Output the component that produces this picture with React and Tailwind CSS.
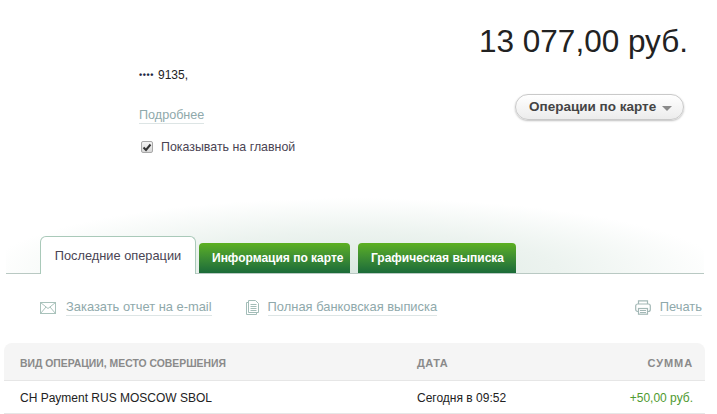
import React from "react";

function MailIcon() {
  return (
    <svg width="16" height="12" viewBox="0 0 16 12" fill="none" stroke="#a9c2bb" strokeWidth="1">
      <rect x="0.5" y="0.5" width="15" height="11" />
      <path d="M0.5 0.5L8 6.5L15.5 0.5M0.5 11.5L6 5M15.5 11.5L10 5" />
    </svg>
  );
}

function DocIcon() {
  return (
    <svg width="14" height="15" viewBox="0 0 14 15" fill="none" stroke="#a3bdb8" strokeWidth="1">
      <path d="M2.5 2.5H0.5V14.5H10.5V12.5" />
      <path d="M2.5 0.5H9.5L12.5 3.5V12.5H2.5Z" fill="#fff" />
      <path d="M4.5 4.5H10.5M4.5 6.5H10.5M4.5 8.5H10.5M4.5 10.5H10.5" />
    </svg>
  );
}

function PrintIcon() {
  return (
    <svg width="16" height="15" viewBox="0 0 16 15" fill="none" stroke="#a3b8b6" strokeWidth="1.2">
      <path d="M3.5 4V0.8H12.5V4" />
      <rect x="0.7" y="4" width="14.6" height="7.5" rx="2" />
      <rect x="3.5" y="8.5" width="9" height="5.7" fill="#fff" />
      <path d="M5 10.5H11M5 12.5H11" />
    </svg>
  );
}

function ActionLink({ icon, children, className }) {
  return (
    <a href="#" className={`flex items-center ${className}`}>
      {icon}
      <span className="text-[12.9px] leading-[16px] text-[#8fa9ab] border-b border-[#dde5e5]">{children}</span>
    </a>
  );
}

export default function App() {
  return (
    <div className="w-[717px] h-[414px] overflow-hidden bg-white text-[12px] text-[#222] font-['Liberation_Sans',Arial,sans-serif]">
      <div className="h-[236px] flex justify-between">
        <div className="pl-[139px] pt-[67px]">
          <div className="flex items-center h-[16px] leading-[16px]">
            <span className="text-[#1f2a44] text-[9px] tracking-[0.6px] font-bold mr-[4px]">••••</span>
            <span>9135,</span>
          </div>
          <a href="#" className="inline-block mt-[25px] text-[12.6px] leading-[15px] text-[#8fa9ab] border-b border-[#dde5e5]">
            Подробнее
          </a>
          <label className="flex items-center mt-[15px] ml-[2px]">
            <span className="w-[12px] h-[12px] flex items-center justify-center rounded-[2px] border border-[#a8a8a8] bg-gradient-to-b from-[#f4f4f4] to-[#d8d8d8]">
              <svg width="10" height="9" viewBox="0 0 10 9" fill="none" stroke="#333" strokeWidth="2">
                <path d="M1.5 4.5L4 7L8.5 1.5" />
              </svg>
            </span>
            <span className="ml-[8px] text-[12.4px] text-[#4a4453] leading-[16px]">Показывать на главной</span>
          </label>
        </div>
        <div className="pr-[29px] flex flex-col items-end">
          <div className="pt-[22px] text-[31.5px] leading-[38px] text-[#222]">13 077,00 руб.</div>
          <button className="mt-[34px] mr-[4px] w-[169px] h-[26px] pl-[13px] flex items-center rounded-full border border-[#c9c9c9] bg-gradient-to-b from-white to-[#ececec] shadow-[0_1px_2px_rgba(0,0,0,0.25)]">
            <span className="text-[13.5px] font-bold text-[#444]">Операции по карте</span>
            <span className="ml-[6px] mt-[2px] w-0 h-0 border-x-[5px] border-x-transparent border-t-[5px] border-t-[#8a8a8a]" />
          </button>
        </div>
      </div>

      <div className="relative ml-[6px] w-[698px] h-[38px] flex items-end pl-[34px] border-b border-[#b9c9c3]">
        <div className="absolute left-0 right-0 bottom-0 h-[75px] bg-[radial-gradient(ellipse_53%_100%_at_50%_100%,#dbe8e1_0%,#ecf3ef_55%,#ffffff_100%)]" />
        <div className="relative z-10 w-[156px] h-[38px] -mb-px flex items-center justify-center bg-white border border-b-0 border-[#a9c9b9] rounded-t-[6px] text-[#4a4453] text-[12.8px]">
          Последние операции
        </div>
        <div className="relative z-10 ml-[3px] w-[151px] h-[30px] flex items-center pl-[13px] rounded-t-[4px] bg-gradient-to-b from-[#5cb01f] to-[#1a6b38] text-white font-bold text-[12px]">
          Информация по карте
        </div>
        <div className="relative z-10 ml-[8px] w-[158px] h-[30px] flex items-center pl-[13px] rounded-t-[4px] bg-gradient-to-b from-[#5cb01f] to-[#1a6b38] text-white font-bold text-[12px]">
          Графическая выписка
        </div>
      </div>

      <div className="h-[69px] flex items-center pl-[40px] pr-[15px] pb-[2px]">
        <ActionLink icon={<MailIcon />} className="gap-[10px]">Заказать отчет на e-mail</ActionLink>
        <ActionLink icon={<DocIcon />} className="gap-[8px] ml-[34px]">Полная банковская выписка</ActionLink>
        <ActionLink icon={<PrintIcon />} className="gap-[9px] ml-auto">Печать</ActionLink>
      </div>

      <div className="ml-[4px] w-[701px]">
        <div className="h-[38px] pt-[4px] flex items-center pl-[16px] pr-[12px] bg-[#f5f5f5] rounded-t-[8px] border-b border-[#e6e6e6] font-bold text-[#8a8a8a]">
          <span className="w-[397px] text-[10.4px]">ВИД ОПЕРАЦИИ, МЕСТО СОВЕРШЕНИЯ</span>
          <span className="text-[11px] tracking-[0.5px]">ДАТА</span>
          <span className="ml-auto text-[11px] tracking-[0.9px]">СУММА</span>
        </div>
        <div className="h-[33px] pt-[1px] flex items-center pl-[16px] pr-[12px] border-b border-[#e6e6e6] text-[12px]">
          <span className="w-[397px]">CH Payment RUS MOSCOW SBOL</span>
          <span>Сегодня в 09:52</span>
          <span className="ml-auto text-[#4f9a2f]">+50,00 руб.</span>
        </div>
      </div>
    </div>
  );
}
